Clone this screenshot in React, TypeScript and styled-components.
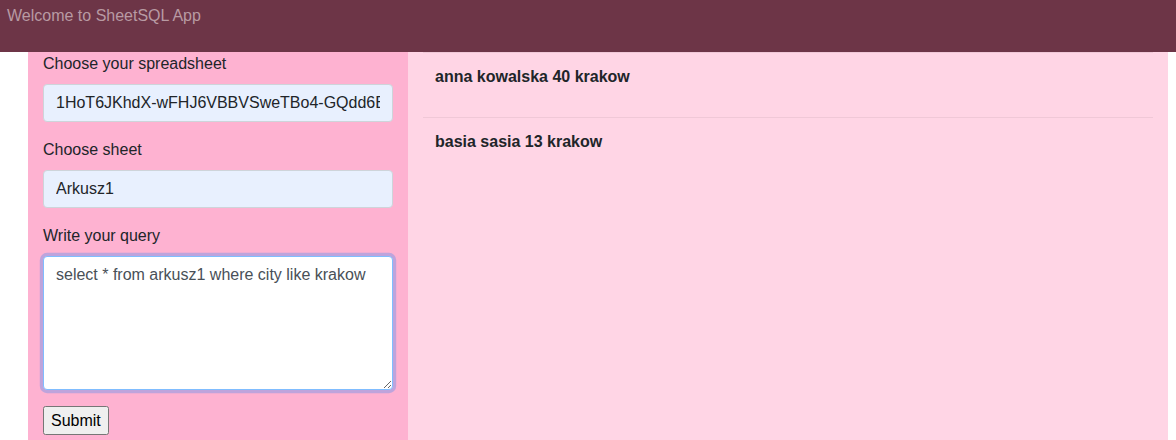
import styled, { createGlobalStyle } from "styled-components";

const GlobalStyle = createGlobalStyle`
  body {
    margin: 0;
    font-family: "Liberation Sans", Arial, sans-serif;
    font-size: 16px;
    line-height: 1.5;
    color: #212529;
    background: #fff;
  }
  * { box-sizing: border-box; }
`;

const rows = ["anna kowalska 40 krakow", "basia sasia 13 krakow"];

const App = () => {
  return (
    <>
      <GlobalStyle />
      <Header>Welcome to SheetSQL App</Header>
      <Main>
        <FormPanel>
          <Label>Choose your spreadsheet</Label>
          <Input defaultValue="1HoT6JKhdX-wFHJ6VBBVSweTBo4-GQdd6Ek8sSkDlt0" />
          <Label>Choose sheet</Label>
          <Input defaultValue="Arkusz1" />
          <Label>Write your query</Label>
          <Query defaultValue="select * from arkusz1 where city like krakow" autoFocus />
          <Submit>Submit</Submit>
        </FormPanel>
        <Results>
          {rows.map((row) => (
            <ResultRow key={row}>{row}</ResultRow>
          ))}
        </Results>
      </Main>
    </>
  );
};

export default App;

const Header = styled.header`
  height: 52px;
  background: #6d3547;
  color: #b89aa3;
  padding: 4px 7px;
  font-size: 16px;
  line-height: 24px;
`;

const Main = styled.main`
  display: grid;
  grid-template-columns: 380px 760px;
  margin-left: 28px;
  min-height: 388px;
`;

const FormPanel = styled.form`
  background: #feb2d1;
  padding: 0 15px 4px;
  display: flex;
  flex-direction: column;
  align-items: flex-start;
`;

const Label = styled.label`
  margin-bottom: 8px;
  line-height: 24px;
`;

const Input = styled.input`
  width: 100%;
  height: 38px;
  padding: 6px 12px;
  font-family: inherit;
  font-size: 16px;
  color: #212529;
  background: #e8f0fe;
  border: 1px solid #ced4da;
  border-radius: 4px;
  margin-bottom: 16px;
  outline: none;
`;

const Query = styled.textarea`
  width: 100%;
  height: 134px;
  padding: 6px 12px;
  font-family: inherit;
  font-size: 16px;
  line-height: 24px;
  color: #495057;
  background: #fff;
  border: 1px solid #80bdff;
  border-radius: 4px;
  box-shadow: 0 0 0 3.2px rgba(0, 123, 255, 0.25);
  outline: none;
  margin-bottom: 16px;
  resize: vertical;
`;

const Submit = styled.button`
  font-family: "Liberation Sans", Arial, sans-serif;
  font-size: 16px;
  height: 29px;
  padding: 1px 6px;
`;

const Results = styled.section`
  background: #ffd5e5;
  padding: 0 15px;
`;

const ResultRow = styled.div`
  padding: 12px 12px 28px;
  border-top: 1px solid rgba(0, 0, 0, 0.06);
  font-weight: 700;
  line-height: 24px;
`;
